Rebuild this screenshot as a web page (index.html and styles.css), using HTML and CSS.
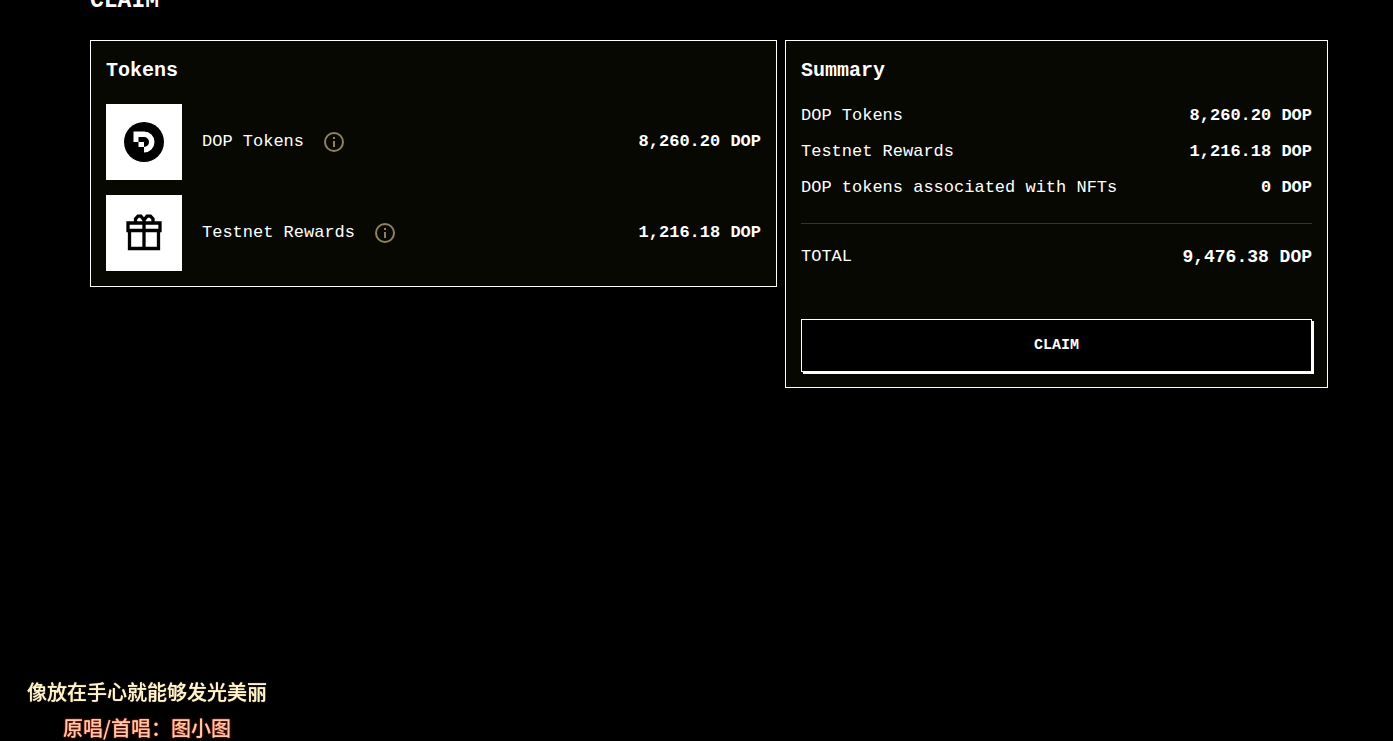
FILE: index.html
```html
<!DOCTYPE html>
<html lang="en">
<head>
<meta charset="utf-8">
<title>Claim</title>
<link rel="stylesheet" href="styles.css">
</head>
<body>
<main class="page">
  <h1 class="page-title">CLAIM</h1>
  <div class="columns">
    <section class="panel">
      <h2 class="panel-title">Tokens</h2>
      <ul class="tokens">
        <li class="token">
          <span class="tile">
            <svg width="40" height="40" viewBox="0 0 40 40" aria-hidden="true">
              <circle cx="20" cy="20" r="20" fill="#000"/>
              <path fill="#fff" d="M9.500 9.500H20A10.500 10.500 0 0 1 20 30.500V25H14.500V20H9.500Z"/>
              <path fill="#000" d="M14.500 15H20A5 5 0 0 1 20 25V20H14.500Z"/>
            </svg>
          </span>
          <span class="token-name">DOP Tokens</span>
          <button class="info" type="button" aria-label="About DOP Tokens">
            <svg width="20" height="20" viewBox="0 0 20 20"><circle cx="10" cy="10" r="9" fill="none" stroke="#8e8060" stroke-width="2"/><path fill="#8e8060" d="M9 5h2v2H9zM9 9h2v6H9z"/></svg>
          </button>
          <strong class="amount">8,260.20 DOP</strong>
        </li>
        <li class="token">
          <span class="tile">
            <svg width="36" height="38" viewBox="0 0 36 38" fill="none" stroke="#000" stroke-width="3.300" aria-hidden="true">
              <path d="M2 9H34V16.500H2ZM3.500 16.500V34.500H32.500V16.500M18 6V34.500M9.500 9V5L12 2.200H15L18 6L21 2.200H24.500L27 5V9"/>
            </svg>
          </span>
          <span class="token-name">Testnet Rewards</span>
          <button class="info" type="button" aria-label="About Testnet Rewards">
            <svg width="20" height="20" viewBox="0 0 20 20"><circle cx="10" cy="10" r="9" fill="none" stroke="#8e8060" stroke-width="2"/><path fill="#8e8060" d="M9 5h2v2H9zM9 9h2v6H9z"/></svg>
          </button>
          <strong class="amount">1,216.18 DOP</strong>
        </li>
      </ul>
    </section>
    <section class="panel">
      <h2 class="panel-title">Summary</h2>
      <dl class="summary">
        <div class="row"><dt>DOP Tokens</dt><dd>8,260.20 DOP</dd></div>
        <div class="row"><dt>Testnet Rewards</dt><dd>1,216.18 DOP</dd></div>
        <div class="row"><dt>DOP tokens associated with NFTs</dt><dd>0 DOP</dd></div>
        <div class="row total"><dt>TOTAL</dt><dd>9,476.38 DOP</dd></div>
      </dl>
      <button class="claim" type="button">CLAIM</button>
    </section>
  </div>
</main>
<aside class="lyrics" lang="zh-CN">
  <p class="lyric">像放在手心就能够发光美丽</p>
  <p class="lyric credit">原唱/首唱：图小图</p>
</aside>
</body>
</html>
```
FILE: styles.css
```css
* {
  box-sizing: border-box;
}

body {
  margin: 0;
  background: #000;
  color: #fff;
  font: 17px/24px "Liberation Mono", monospace;
}

h1, h2, ul, dl, dd, p {
  margin: 0;
  padding: 0;
}

.page {
  padding: 0 65px 0 90px;
}

.page-title {
  margin: -15px 0 23px;
  font-size: 23px;
  line-height: 32px;
}

.columns {
  display: grid;
  grid-template-columns: 687fr 543fr;
  align-items: start;
  gap: 8px;
}

.panel {
  padding: 15px;
  border: 1px solid #fff;
  background: #080803;
}

.panel-title {
  margin-bottom: 18px;
  font-size: 20px;
  line-height: 30px;
}

.tokens {
  display: grid;
  gap: 15px;
  list-style: none;
}

.token {
  display: flex;
  align-items: center;
  gap: 20px;
}

.tile {
  display: grid;
  place-items: center;
  width: 76px;
  height: 76px;
  background: #fff;
}

.info {
  display: flex;
  padding: 0;
  border: 0;
  background: none;
}

.amount {
  margin-left: auto;
}

.summary {
  display: grid;
  gap: 12px;
  margin-bottom: 50px;
}

.row {
  display: flex;
  justify-content: space-between;
}

.row dd {
  font-weight: bold;
}

.total {
  margin-top: 11px;
  padding-top: 21px;
  border-top: 1px solid #36342a;
}

.total dd {
  font-size: 18px;
}

.claim {
  display: block;
  width: 100%;
  padding: 14px;
  border: 1px solid #fff;
  background: #000;
  box-shadow: 2px 2px #fff;
  color: #fff;
  font: bold 15px/23px "Liberation Mono", monospace;
}

/* Desktop lyrics floating above the page. */
.lyrics {
  position: fixed;
  bottom: -5px;
  left: 27px;
  font: 500 20px/36px "Noto Sans CJK SC", sans-serif;
  text-align: center;
  white-space: nowrap;
}

.lyric {
  color: #fff3d0;
  text-shadow: 0 0 1px #d9bd80;
}

.lyric.credit {
  color: #ffc8a8;
  text-shadow: 0 0 2px #f04028;
}
```
